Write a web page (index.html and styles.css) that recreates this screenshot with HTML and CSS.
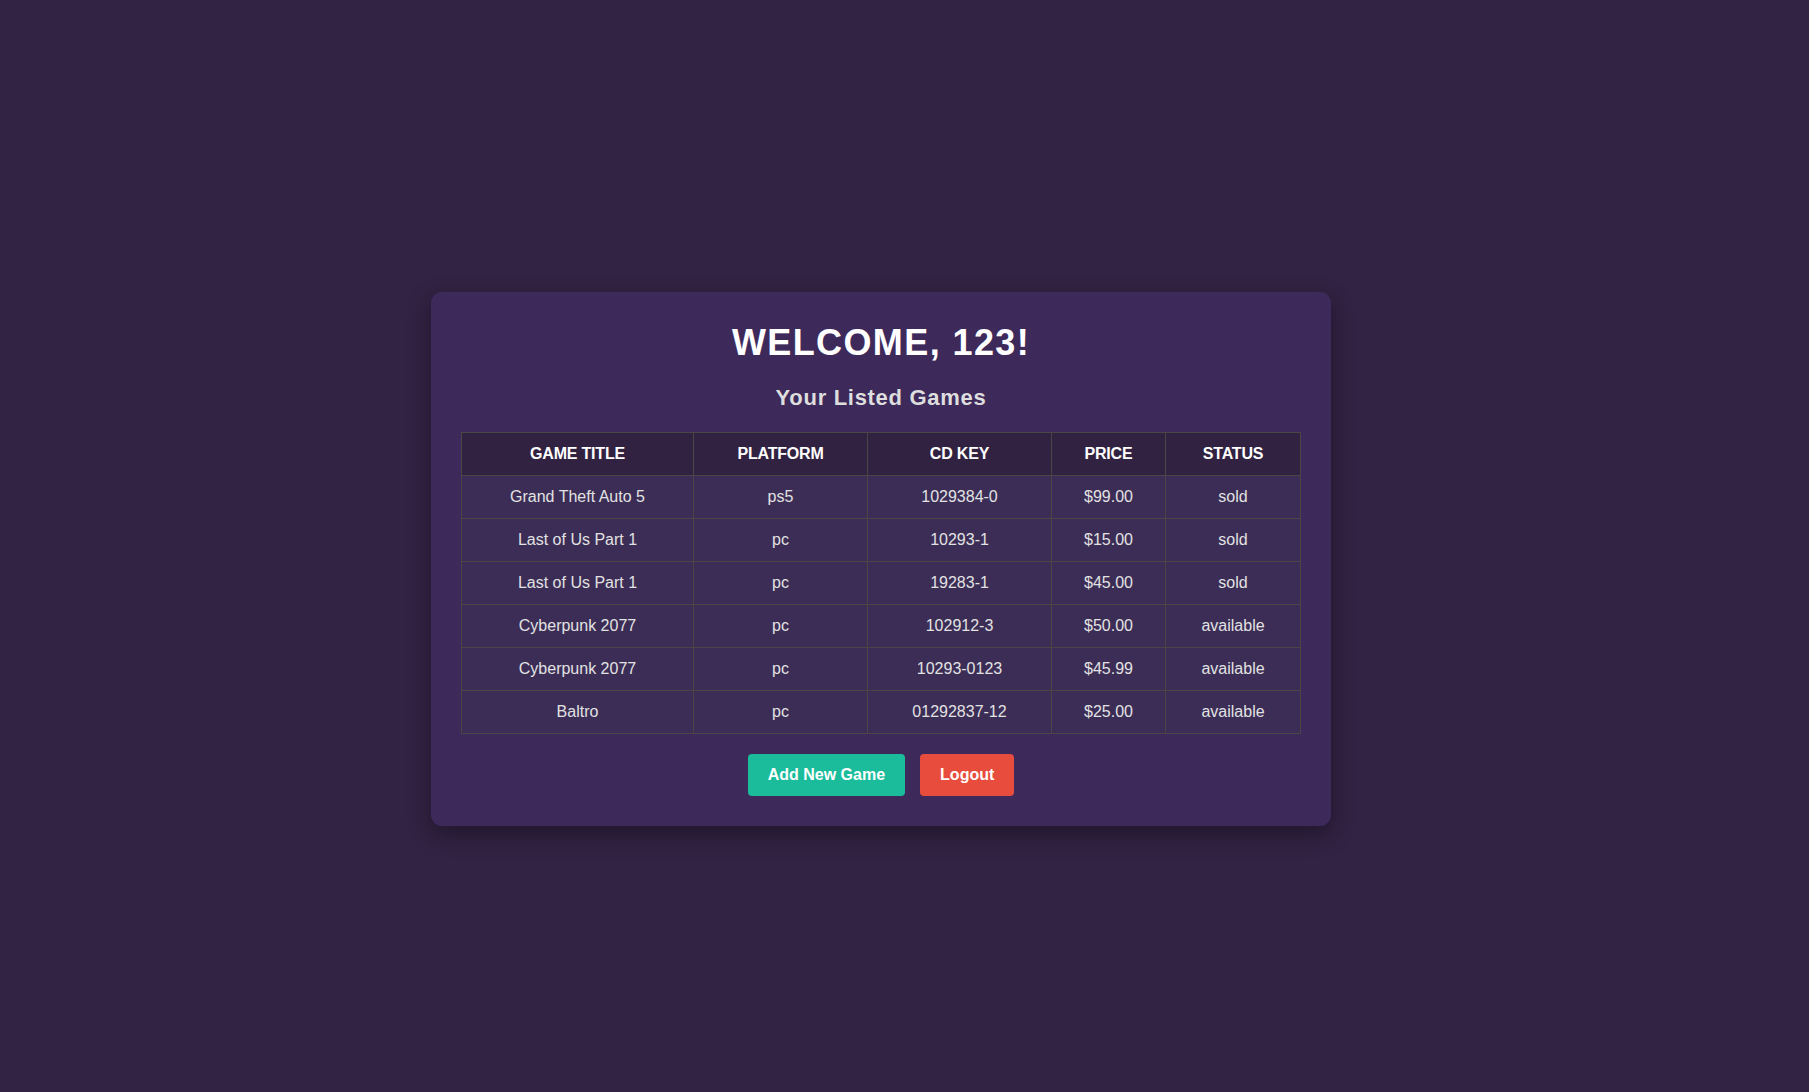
FILE: index.html
```html
<!DOCTYPE html>
<html lang="en">
<head>
<meta charset="utf-8">
<title>Dashboard</title>
<link rel="stylesheet" href="styles.css">
</head>
<body>
<div class="card">
  <h1 class="welcome">Welcome, 123!</h1>
  <h2 class="subtitle">Your Listed Games</h2>
  <table class="games">
    <colgroup>
      <col class="c-title">
      <col class="c-platform">
      <col class="c-key">
      <col class="c-price">
      <col class="c-status">
    </colgroup>
    <thead>
      <tr><th>Game Title</th><th>Platform</th><th>CD Key</th><th>Price</th><th>Status</th></tr>
    </thead>
    <tbody>
      <tr><td>Grand Theft Auto 5</td><td>ps5</td><td>1029384-0</td><td>$99.00</td><td>sold</td></tr>
      <tr><td>Last of Us Part 1</td><td>pc</td><td>10293-1</td><td>$15.00</td><td>sold</td></tr>
      <tr><td>Last of Us Part 1</td><td>pc</td><td>19283-1</td><td>$45.00</td><td>sold</td></tr>
      <tr><td>Cyberpunk 2077</td><td>pc</td><td>102912-3</td><td>$50.00</td><td>available</td></tr>
      <tr><td>Cyberpunk 2077</td><td>pc</td><td>10293-0123</td><td>$45.99</td><td>available</td></tr>
      <tr><td>Baltro</td><td>pc</td><td>01292837-12</td><td>$25.00</td><td>available</td></tr>
    </tbody>
  </table>
  <div class="actions">
    <button class="btn btn-add">Add New Game</button>
    <button class="btn btn-logout">Logout</button>
  </div>
</div>
</body>
</html>
```

FILE: styles.css
```css
* { box-sizing: border-box; }

html, body {
  margin: 0;
  padding: 0;
}

body {
  min-height: 100vh;
  background: #322243;
  font-family: "Liberation Sans", Arial, sans-serif;
  display: flex;
  justify-content: center;
  align-items: center;
}

.card {
  width: 900px;
  margin: 26px 47px 0 0;
  padding: 30px;
  background: #3d2a5b;
  border-radius: 11px;
  box-shadow: 0 8px 22px rgba(0, 0, 0, 0.35);
  text-align: center;
}

.welcome {
  margin: 0 0 22px;
  font-size: 36px;
  line-height: 41px;
  font-weight: bold;
  letter-spacing: 1.4px;
  text-transform: uppercase;
  color: #ffffff;
}

.subtitle {
  margin: 0 0 22px;
  font-size: 22px;
  line-height: 25px;
  font-weight: bold;
  letter-spacing: 0.7px;
  color: #dedede;
}

.games {
  width: 839px;
  border-collapse: collapse;
  table-layout: fixed;
  margin: 0 0 20px;
}

.c-title { width: 232px; }
.c-platform { width: 174px; }
.c-key { width: 184px; }
.c-price { width: 114px; }
.c-status { width: 135px; }

.games th,
.games td {
  border: 1px solid #4a4646;
  padding: 12px 10px;
  font-size: 16px;
  line-height: 18px;
  text-align: center;
}

.games th {
  background: #312241;
  color: #ffffff;
  font-weight: bold;
  text-transform: uppercase;
  letter-spacing: -0.2px;
}

.games td {
  background: #3b2d56;
  color: #e2e2e2;
}

.actions {
  display: flex;
  justify-content: center;
  gap: 15px;
}

.btn {
  border: none;
  border-radius: 4px;
  padding: 12px 20px;
  font-family: "Liberation Sans", Arial, sans-serif;
  font-size: 16px;
  line-height: 18px;
  font-weight: bold;
  color: #ffffff;
  cursor: pointer;
}

.btn-add { background: #1abc9c; }
.btn-logout { background: #e74c3c; }
```
